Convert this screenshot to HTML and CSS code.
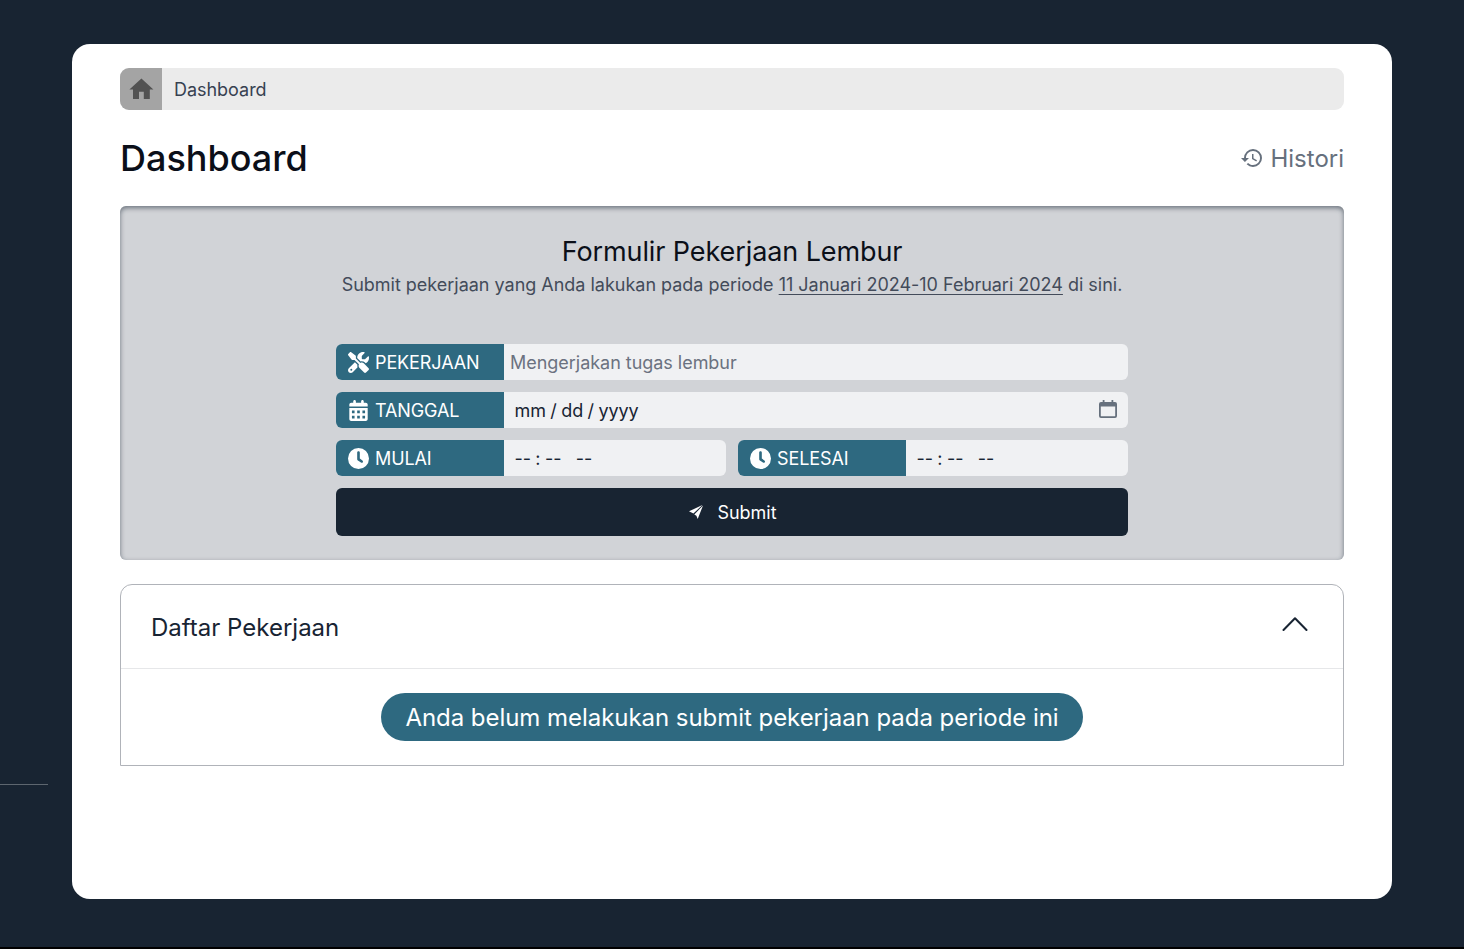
FILE: index.html
```html
<!DOCTYPE html>
<html lang="id">
<head>
<meta charset="utf-8">
<title>Dashboard</title>
<link rel="stylesheet" href="styles.css">
</head>
<body>
<svg class="defs" width="0" height="0" aria-hidden="true">
  <symbol id="clock" viewBox="0 0 24 24"><path fill-rule="evenodd" d="M12 0a12 12 0 1 1 0 24A12 12 0 1 1 12 0zM10.500 5v7.800c0 .7.300 1.200.8 1.600l3.500 2.300c1.800 1 3.300-1.300 1.700-2.500L13.500 12V5c0-1.800-3-1.800-3 0z"/></symbol>
</svg>
<div class="shell">
  <aside class="rail"><hr class="rail-line"></aside>
  <main class="panel">
    <nav class="crumbs">
      <a class="crumb-home"><svg viewBox="0 0 24 24"><path d="M10 20v-6h4v6h5v-8h3L12 3 2 12h3v8z"/></svg></a>
      <span class="crumb">Dashboard</span>
    </nav>
    <header class="heading">
      <h1>Dashboard</h1>
      <a class="history"><svg viewBox="0 0 24 24"><path d="M13 3a9 9 0 0 0-9 9H1l3.890 3.890.07.14L9 12H6c0-3.870 3.130-7 7-7s7 3.130 7 7-3.130 7-7 7c-1.930 0-3.680-.79-4.940-2.060l-1.420 1.420A8.950 8.950 0 0 0 13 21a9 9 0 0 0 0-18zm-1 5v5l4.280 2.540.72-1.210-3.500-2.080V8H12z"/></svg><span>Histori</span></a>
    </header>
    <section class="form-card">
      <h2>Formulir Pekerjaan Lembur</h2>
      <p class="lead">Submit pekerjaan yang Anda lakukan pada periode <span class="period">11 Januari 2024-10 Februari 2024</span> di sini.</p>
      <form class="form">
        <div class="field">
          <label class="tag"><svg viewBox="0 0 512 512"><path d="M78.600 5C69.100-2.400 55.600-1.500 47 7L7 47c-8.500 8.500-9.400 22-2.100 31.600l80 104c4.500 5.900 11.600 9.400 19 9.400h54.100l109 109c-14.700 29-10 65.400 14.300 89.600l112 112c12.500 12.500 32.800 12.500 45.300 0l64-64c12.500-12.500 12.500-32.800 0-45.300l-112-112c-24.200-24.200-60.600-29-89.600-14.300l-109-109V104c0-7.500-3.500-14.500-9.400-19L78.600 5zM19.900 396.100C7.200 408.800 0 426.100 0 444.100C0 481.600 30.400 512 67.900 512c18 0 35.300-7.200 48-19.900L233.700 374.300c-7.800-20.900-9-43.600-3.600-65.100l-61.700-61.700L19.900 396.100zM512 144c0-10.500-1.100-20.700-3.200-30.500c-2.400-11.200-16.100-14.100-24.200-6l-63.900 63.900c-3 3-7.100 4.700-11.300 4.700H352c-8.800 0-16-7.200-16-16V102.600c0-4.200 1.700-8.300 4.700-11.300l63.900-63.900c8.100-8.100 5.200-21.800-6-24.200C388.700 1.100 378.500 0 368 0C288.500 0 224 64.500 224 144l0 .8 85.300 85.300c36-9.100 75.800 .5 104 28.700L429 274.500c49-23 83-72.800 83-130.500zM56 432a24 24 0 1 1 48 0 24 24 0 1 1 -48 0z"/></svg><span>PEKERJAAN</span></label>
          <div class="control placeholder">Mengerjakan tugas lembur</div>
        </div>
        <div class="field">
          <label class="tag"><svg viewBox="-32 0 512 512"><path fill-rule="evenodd" d="M128 0c17.700 0 32 14.300 32 32V64H288V32c0-17.700 14.300-32 32-32s32 14.300 32 32V64h48c26.500 0 48 21.500 48 48v48H0V112C0 85.500 21.500 64 48 64H96V32c0-17.700 14.300-32 32-32zM0 192H448V464c0 26.500-21.500 48-48 48H48c-26.500 0-48-21.500-48-48zM64 256v64h64v-64zM192 256v64h64v-64zM320 256v64h64v-64zM64 384v64h64v-64zM192 384v64h64v-64zM320 384v64h64v-64z"/></svg><span>TANGGAL</span></label>
          <div class="control date"><span class="parts"><span>mm</span><span>/</span><span>dd</span><span>/</span><span>yyyy</span></span>
            <svg class="picker" viewBox="0 0 18 18"><path fill-rule="evenodd" d="M3.700 0h1.800v2h7V0h1.800v2H16a2 2 0 0 1 2 2v12a2 2 0 0 1-2 2H2a2 2 0 0 1-2-2V4a2 2 0 0 1 2-2h1.700zM1.800 6.500v9.200a.6.6 0 0 0 .6.6h13.200a.6.600 0 0 0 .6-.6V6.500z"/></svg></div>
        </div>
        <div class="pair">
          <div class="field">
            <label class="tag"><svg><use href="#clock"/></svg><span>MULAI</span></label>
            <div class="control date"><span class="parts"><span>--</span><span>:</span><span>--</span><span class="ampm">--</span></span></div>
          </div>
          <div class="field">
            <label class="tag"><svg><use href="#clock"/></svg><span>SELESAI</span></label>
            <div class="control date"><span class="parts"><span>--</span><span>:</span><span>--</span><span class="ampm">--</span></span></div>
          </div>
        </div>
        <button class="submit" type="button"><svg viewBox="0 0 14 14"><path d="M13.400.1 0 6.300l4.400 2.200z"/><path d="M14 .5 8.700 14 7.400 10.800 5.300 9.400z"/></svg><span>Submit</span></button>
      </form>
    </section>
    <section class="accordion">
      <div class="accordion-head"><span>Daftar Pekerjaan</span>
        <svg viewBox="0 0 26 14"><path d="M1.500 13 13 1.200 24.500 13"/></svg></div>
      <div class="accordion-body"><span class="pill">Anda belum melakukan submit pekerjaan pada periode ini</span></div>
    </section>
  </main>
</div>
</body>
</html>
```
FILE: styles.css
```css
* { box-sizing: border-box; }
body {
  margin: 0;
  height: 949px;
  overflow: hidden;
  background: #000;
  font-family: Inter, sans-serif;
  font-size: 18px;
  line-height: 24px;
  letter-spacing: -.03px;
  color: #182433;
}
svg { fill: currentColor; flex: none; }
.defs { position: absolute; }
h1, h2, p { margin: 0; font-weight: 400; }
.shell {
  display: flex;
  height: 947px;
  background: #182432;
}
.rail { width: 72px; padding-top: 784px; }
.rail-line {
  width: 48px;
  height: 1px;
  margin: 0;
  border: 0;
  background: #5d666f;
}
.panel {
  width: 1320px;
  height: 855px;
  margin-top: 44px;
  padding: 24px 48px;
  border-radius: 18px;
  background: #fff;
}
.crumbs {
  display: flex;
  height: 42px;
  border-radius: 9px;
  overflow: hidden;
  background: #ebebeb;
}
.crumb-home {
  display: flex;
  width: 42px;
  align-items: center;
  justify-content: center;
  background: #a4a4a4;
  color: #525252;
}
.crumb-home svg { width: 28.800px; height: 28.800px; }
.crumb { padding: 10px 12px; color: #374151; }
.heading {
  display: flex;
  align-items: center;
  justify-content: space-between;
  height: 48px;
  margin: 24px 0;
}
h1 { font-size: 36px; line-height: 48px; font-weight: 500; letter-spacing: 0; color: #0b0f19; }
.history {
  display: flex;
  align-items: center;
  gap: 6px;
  font-size: 24px;
  line-height: 36px;
  letter-spacing: 0;
  color: #66707d;
}
.history svg { width: 24px; height: 24px; }
.history span { padding-top: 2px; }
.form-card {
  height: 354px;
  padding-top: 28px;
  border-radius: 6px;
  background: #d1d3d7;
  box-shadow: inset 0 2px 5px rgba(24, 36, 51, .55);
  text-align: center;
}
h2 { font-size: 27px; line-height: 36px; letter-spacing: -.1px; color: #0b0f19; }
.lead { line-height: 30px; letter-spacing: -.015px; color: #434b5a; }
.period { text-decoration: underline 1px; text-underline-offset: 3px; text-decoration-skip-ink: none; }
.form {
  display: flex;
  flex-direction: column;
  gap: 12px;
  width: 792px;
  margin: 44px auto 0;
}
.field {
  display: flex;
  flex: 1;
  height: 36px;
  border-radius: 6px;
  overflow: hidden;
  background: #f0f1f3;
  text-align: left;
}
.form > .field { flex: none; }
.pair { display: flex; gap: 12px; }
.tag {
  display: flex;
  align-items: center;
  gap: 6px;
  width: 168px;
  padding-left: 12px;
  background: #2e6980;
  color: #fff;
  letter-spacing: -.1px;
}
.tag svg { width: 21px; height: 21px; }
.tag span { padding-top: 2px; }
.control { display: flex; flex: 1; align-items: center; padding: 2px 6px 0; }
.placeholder { color: #6b7280; }
.date { justify-content: space-between; padding: 2px 11px 0 10.500px; }
.parts { display: flex; gap: 4.500px; letter-spacing: -.1px; }
.ampm { margin-left: 10px; }
.picker { width: 18px; height: 18px; margin-top: -4px; color: #66707d; }
.submit {
  display: flex;
  align-items: center;
  justify-content: center;
  gap: 14px;
  height: 48px;
  padding: 0 0 0 2px;
  border: 0;
  border-radius: 6px;
  background: #182432;
  color: #fff;
  font: inherit;
}
.submit svg { width: 14px; height: 14px; }
.submit span { padding-top: 2px; }
.accordion {
  height: 182px;
  margin-top: 24px;
  border: 1px solid #b0b3b9;
  border-radius: 12px 12px 0 0;
}
.accordion-head {
  display: flex;
  align-items: center;
  justify-content: space-between;
  height: 84px;
  padding: 2px 35px 0 30px;
  border-bottom: 1px solid #e6e7e9;
  font-size: 24px;
  letter-spacing: 0;
}
.accordion-head svg {
  width: 26px;
  height: 14px;
  margin-top: -8px;
  fill: none;
  stroke: #182433;
  stroke-width: 2;
  stroke-linecap: round;
  stroke-linejoin: round;
}
.accordion-body { display: flex; justify-content: center; padding: 24px; }
.pill {
  height: 48px;
  padding: 1px 24px 0;
  border-radius: 24px;
  background: #2e6980;
  color: #fff;
  font-size: 24px;
  line-height: 48px;
  letter-spacing: -.045px;
}
```
